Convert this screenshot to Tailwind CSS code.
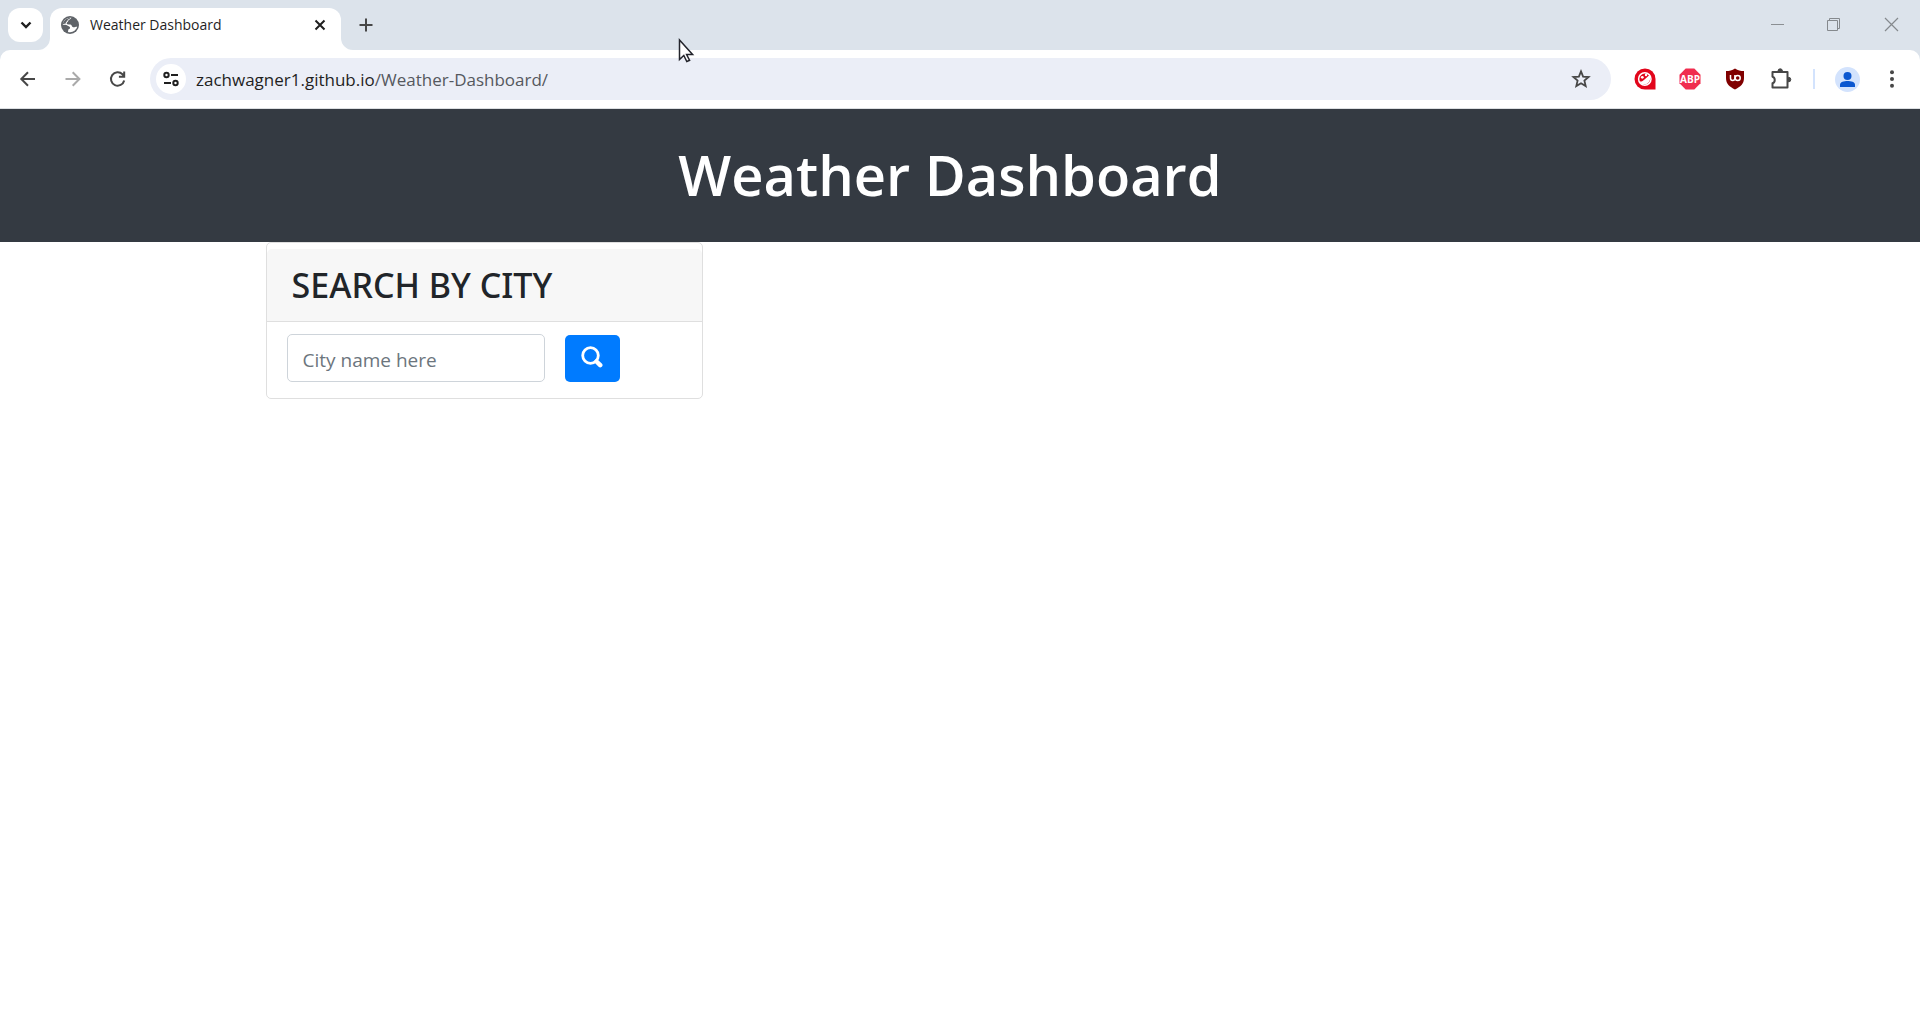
<!DOCTYPE html>
<html lang="en">
<head>
<meta charset="utf-8">
<title>Weather Dashboard</title>
<script src="https://cdn.jsdelivr.net/npm/@tailwindcss/browser@4"></script>
</head>
<body class="flex min-h-screen flex-col bg-white font-['Open_Sans','Noto_Sans',sans-serif] text-[#212529]">
  <!-- Tab strip -->
  <div class="flex h-[50px] items-start bg-[#dce3eb] pt-2 pl-2">
    <button aria-label="Search tabs" class="flex h-[34px] w-[35px] items-center justify-center rounded-xl bg-white">
      <svg class="size-5" viewBox="0 0 20 20" fill="none" stroke="#1f1f1f" stroke-width="2.4"><path d="M5.500 7.500 10 12l4.500-4.500"/></svg>
    </button>
    <div class="relative ml-[7px] flex h-[42px] w-[291px] items-center rounded-t-xl bg-white pr-3 pb-2 pl-[11px]">
      <svg class="absolute bottom-0 -left-3 size-3" viewBox="0 0 12 12" fill="#fff"><path d="M12 0v12H0A12 12 0 0 0 12 0z"/></svg>
      <svg class="absolute bottom-0 -right-3 size-3" viewBox="0 0 12 12" fill="#fff"><path d="M0 0v12h12A12 12 0 0 1 0 0z"/></svg>
      <svg class="size-[18px]" viewBox="0 0 18 18"><circle cx="9" cy="9" r="9" fill="#5f6368"/><path d="M10.500 1.800C9.800 3.600 7.500 3.300 7.200 5c-.3 1.300-1.700 1.300-1.500 2.600.3 1.500 3 .5 4.300 1.200 1.300.8.600 2.200 2.200 2.500 1.500.2 2.300-.6 4-.5-1 3.200-3.800 5.400-7 5.400-.8 0-1.500-.1-2.200-.3l.3-2.300c.3-1 1.700-.6 1.800-1.700 0-1.400-1.600-1.500-2.800-2.400C5.200 8.700 3.500 8.800 1.800 8.700 2 4.900 5.200 1.800 9 1.800z" fill="#fff"/><path d="M9.500 1.900C8.500 3.200 6.700 3 6.400 4.700 6 5.700 4.800 5.600 4.800 7c0 .8-1.600 1-2.900.9C2.400 4.500 5.400 1.800 9.500 1.900z" fill="#5f6368"/></svg>
      <span class="ml-[11px] flex-1 text-[14px] leading-5 text-[#1f1f1f]">Weather Dashboard</span>
      <button aria-label="Close tab"><svg class="size-[18px]" viewBox="0 0 18 18" stroke="#1f1f1f" stroke-width="2"><path d="m4.500 4.500 9 9m0-9-9 9"/></svg></button>
    </div>
    <button aria-label="New tab" class="ml-4 flex h-[34px] w-[18px] items-center justify-center"><svg class="size-[18px]" viewBox="0 0 18 18" stroke="#474747" stroke-width="2"><path d="M9 2.500v13M2.500 9h13"/></svg></button>
    <div class="ml-auto flex h-8 items-center gap-[42px] pr-[21px]">
      <button aria-label="Minimize"><svg class="size-[15px]" viewBox="0 0 15 15" stroke="#8b8f93"><path d="M1 7.500h13"/></svg></button>
      <button aria-label="Restore"><svg class="size-[15px]" viewBox="0 0 15 15" fill="none" stroke="#85898d"><path d="M.5 3.500h10v10h-10zM2.500 3.500v-2h10v10h-2"/></svg></button>
      <button aria-label="Close window"><svg class="size-[15px]" viewBox="0 0 15 15" stroke="#85898d" stroke-width="1.200"><path d="m1 1 13 13M14 1 1 14"/></svg></button>
    </div>
  </div>

  <!-- Toolbar -->
  <div class="bg-[#dce3eb]">
    <div class="flex h-[59px] items-center rounded-t-[10px] border-b border-[#dcdfe2] bg-white pr-[18px] pl-[18px]">
      <div class="flex items-center gap-[25px]">
        <button aria-label="Back"><svg class="size-5" viewBox="0 0 20 20" fill="none" stroke="#474747" stroke-width="2"><path d="M17 10H4M10 3.300 3.300 10l6.700 6.700"/></svg></button>
        <button aria-label="Forward"><svg class="size-5" viewBox="0 0 20 20" fill="none" stroke="#aaa" stroke-width="2"><path d="M2.500 10h13.500M9.700 3.300 16.400 10l-6.700 6.700"/></svg></button>
        <button aria-label="Reload"><svg class="size-5" viewBox="0 0 20 20" fill="none" stroke="#474747" stroke-width="2"><path d="M16.200 11.500A6.700 6.700 0 1 1 14.500 5.300L16 7M16.200 2.500v5.300h-5.300"/></svg></button>
      </div>
      <div class="ml-[22px] flex h-[42px] flex-1 items-center rounded-full bg-[#ebeef7] pr-5 pl-[6px]">
        <button aria-label="View site information" class="flex size-[30px] items-center justify-center rounded-full bg-white"><svg class="size-[18px]" viewBox="0 0 18 18" fill="none" stroke="#1f1f1f" stroke-width="2"><circle cx="4.500" cy="5" r="2.200"/><path d="M9 5h7M2 13h7"/><circle cx="13.500" cy="13" r="2.200"/></svg></button>
        <div class="ml-[10px] flex-1 pt-px text-[17px] leading-6 text-[#1f1f1f]">zachwagner1.github.io<span class="text-[#55585e]">/Weather-Dashboard/</span></div>
        <button aria-label="Bookmark this tab"><svg class="size-5" viewBox="0 0 20 20" fill="none" stroke="#474747" stroke-width="1.800"><path d="m10 2.400 2.100 5.200 5.500.4-4.200 3.600 1.300 5.500L10 14.200l-4.700 2.900 1.300-5.500L2.400 8l5.500-.4z"/></svg></button>
      </div>
      <div class="ml-[23px] flex items-center">
        <button aria-label="Ad blocker"><svg class="size-[22px]" viewBox="0 0 22 22"><path d="M11 .5A10.500 10.500 0 1 0 11 21.500h10.500V11A10.500 10.500 0 0 0 11 .5z" fill="#e2051b"/><circle cx="10.800" cy="11" r="6.200" fill="none" stroke="#fff" stroke-width="1.500"/><path d="M5.500 13.500c2.200.3 3.500-.6 5-2l5-4.500c2 4-.5 9.500-5 9.500-2.500 0-4-1-5-3z" fill="#fff"/><circle cx="8.300" cy="9.300" r="1.400" fill="#fff"/><circle cx="12" cy="7" r="1.200" fill="#fff"/></svg></button>
        <button aria-label="Adblock Plus" class="ml-[23px]"><svg class="size-[22px]" viewBox="0 0 22 22"><path d="M6.700.5h8.600l6.200 6.200v8.600l-6.200 6.200H6.700L.5 15.300V6.700z" fill="#f02d4f"/><text x="11" y="14.500" text-anchor="middle" font-family="Open Sans" font-weight="700" font-size="10" fill="#fff">ABP</text></svg></button>
        <button aria-label="uBlock Origin" class="ml-[23px]"><svg class="size-[22px]" viewBox="0 0 22 22"><path d="M11 .5c3 2 5.500 2.500 9 2.500v7c0 6-3.500 8.500-9 11.500C5.500 18.500 2 16 2 10V3c3.500 0 6-.5 9-2.500z" fill="#800000"/><path d="M6.500 7v3.300a2.200 2.200 0 0 0 4.400 0V7" fill="none" stroke="#fff" stroke-width="1.500"/><circle cx="13.700" cy="10" r="2.500" fill="none" stroke="#fff" stroke-width="1.500"/></svg></button>
        <button aria-label="Extensions" class="ml-[24px]"><svg class="size-[22px]" viewBox="0 0 22 22"><path d="M2.500 4h15v15.500h-15v-4.200c3-.8 3-5.800 0-6.600z" fill="none" stroke="#474747" stroke-width="2" stroke-linejoin="round"/><path d="M8 3a2.200 2.200 0 0 1 4.400 0zM18.500 9.300a2.300 2.300 0 0 1 0 4.600z" fill="#474747" stroke="#474747"/></svg></button>
        <div class="ml-[21px] h-5 w-[2px] bg-[#d3e3fd]"></div>
        <button aria-label="Profile" class="ml-5"><svg class="size-[25px]" viewBox="0 0 25 25"><circle cx="12.500" cy="12.500" r="12.500" fill="#d3e3fd"/><circle cx="12.500" cy="9" r="4" fill="#0b57d0"/><path d="M5 20v-2.500c0-2.500 4-3.500 7.500-3.500s7.500 1 7.500 3.500V20z" fill="#0b57d0"/></svg></button>
        <button aria-label="Menu" class="ml-[22px]"><svg class="size-5" viewBox="0 0 20 20" fill="#474747"><circle cx="10" cy="3.200" r="2"/><circle cx="10" cy="10" r="2"/><circle cx="10" cy="16.800" r="2"/></svg></button>
      </div>
    </div>
  </div>

  <header class="flex h-[133px] items-center justify-center bg-[#343a42] pr-5 pb-1">
    <h1 class="text-[56px] leading-[72px] font-semibold text-white">Weather Dashboard</h1>
  </header>

  <main class="mx-auto w-full max-w-[1427px]">
    <div class="w-1/3 px-[19px]">
      <section class="rounded-[5px] border border-[#dfdfdf] pt-[6px]">
        <div class="rounded-t-[5px] border-b border-[#dfdfdf] bg-[#f7f7f7] px-[25px] py-4">
          <h2 class="font-['Noto_Sans',sans-serif] text-[34px] leading-10 font-medium">SEARCH BY CITY</h2>
        </div>
        <form class="flex items-center gap-5 px-5 pt-3 pb-4">
          <input type="text" aria-label="City name" placeholder="City name here" class="h-12 w-[258px] rounded-[5px] border border-[#ced4da] px-[15px] pt-1 text-[19px] placeholder:text-[#6c757d]">
          <button type="button" aria-label="Search" class="flex h-[47px] w-[55px] items-center justify-center rounded-[5px] bg-[#007bff]">
            <svg class="mb-[2px] size-[22px]" viewBox="0 0 22 22" fill="none" stroke="#fff"><circle cx="9.500" cy="9.500" r="7.800" stroke-width="2.800"/><path d="m15.500 15.500 3.700 3.700" stroke-width="4.500" stroke-linecap="round"/></svg>
          </button>
        </form>
      </section>
    </div>
  </main>

  <!-- Mouse pointer -->
  <svg class="pointer-events-none absolute top-[38px] left-[678px] h-[26px] w-[18px]" viewBox="0 0 18 26" fill="#fff" stroke="#23242c" stroke-width="1.500"><path d="M1.500 2v19.500l4.300-4 3 6 2.800-1.200-3-5.800h6z"/></svg>
</body>
</html>
